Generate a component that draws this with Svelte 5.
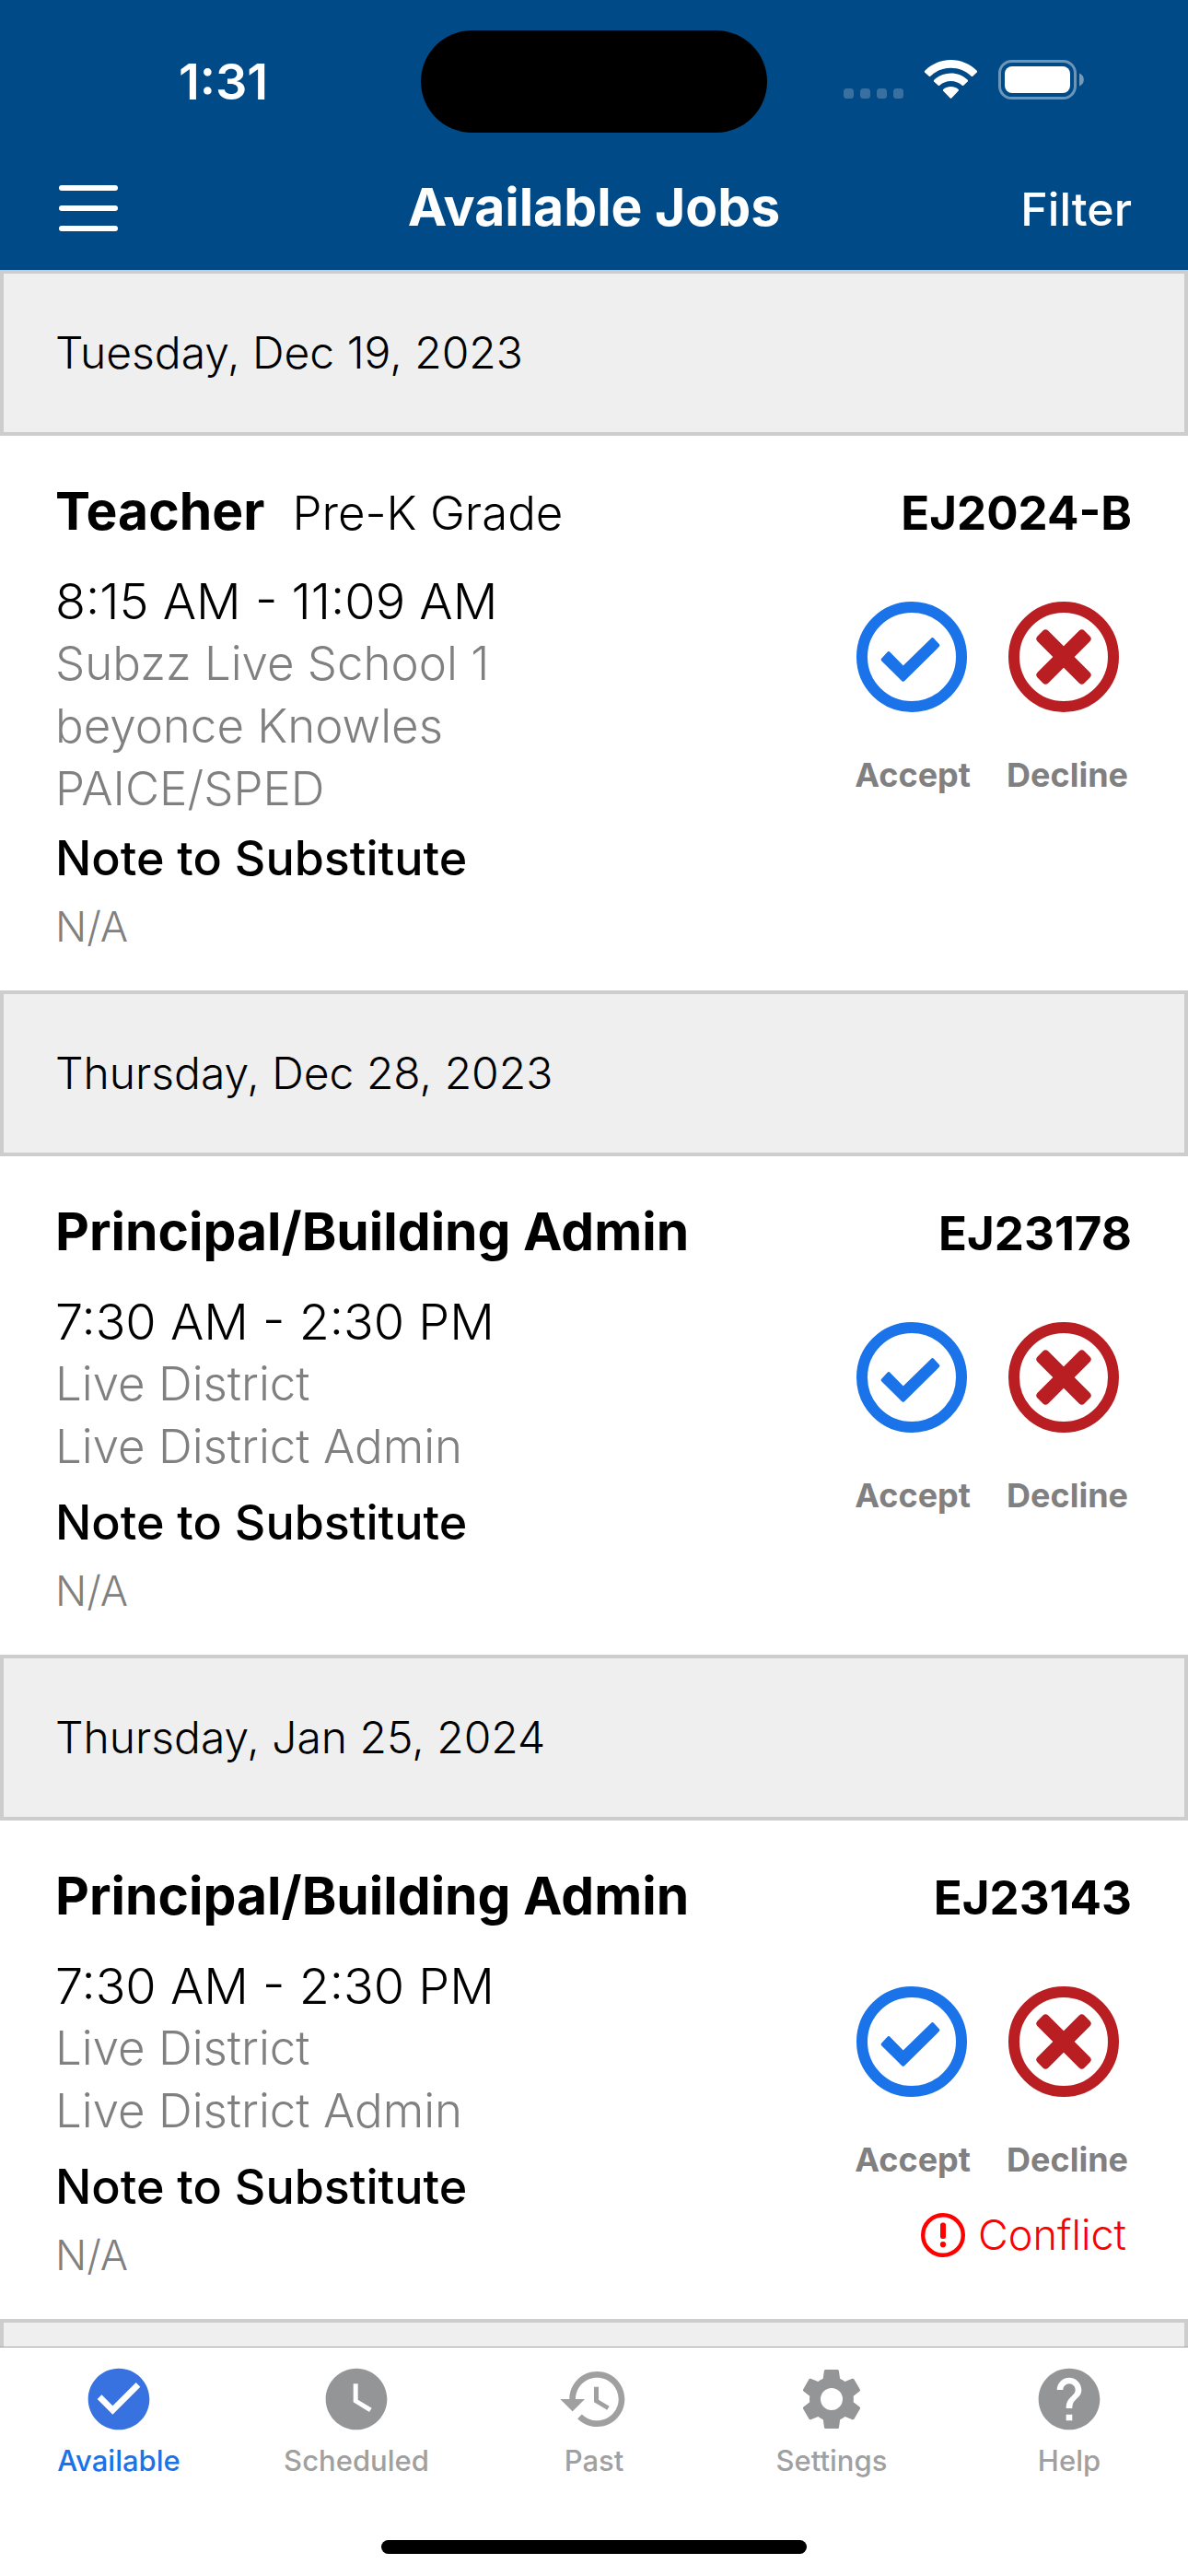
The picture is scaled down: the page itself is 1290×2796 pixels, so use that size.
<script>
  const days = [
    {
      date: 'Tuesday, Dec 19, 2023',
      title: 'Teacher',
      grade: 'Pre-K Grade',
      code: 'EJ2024-B',
      time: '8:15 AM - 11:09 AM',
      details: ['Subzz Live School 1', 'beyonce Knowles', 'PAICE/SPED'],
      note: 'N/A',
      conflict: false
    },
    {
      date: 'Thursday, Dec 28, 2023',
      title: 'Principal/Building Admin',
      code: 'EJ23178',
      time: '7:30 AM - 2:30 PM',
      details: ['Live District', 'Live District Admin'],
      note: 'N/A',
      conflict: false
    },
    {
      date: 'Thursday, Jan 25, 2024',
      title: 'Principal/Building Admin',
      code: 'EJ23143',
      time: '7:30 AM - 2:30 PM',
      details: ['Live District', 'Live District Admin'],
      note: 'N/A',
      conflict: true
    }
  ];

  const tabs = [
    {
      label: 'Available',
      kind: 'active',
      path: 'M12 2C6.48 2 2 6.48 2 12s4.48 10 10 10 10-4.48 10-10S17.52 2 12 2zm-2 15l-5-5 1.41-1.41L10 14.17l7.59-7.59L19 8l-9 9z'
    },
    {
      label: 'Scheduled',
      kind: 'solid',
      path: 'M12 2C6.5 2 2 6.5 2 12s4.5 10 10 10 10-4.5 10-10S17.5 2 12 2zm4.2 14.2L11 13V7h1.5v5.2l4.5 2.7-.8 1.3z'
    },
    {
      label: 'Past',
      kind: 'light',
      path: 'M13 3c-4.97 0-9 4.03-9 9H1l3.89 3.89.07.14L9 12H6c0-3.87 3.13-7 7-7s7 3.13 7 7-3.13 7-7 7c-1.93 0-3.68-.79-4.94-2.06l-1.42 1.42C8.27 19.99 10.51 21 13 21c4.97 0 9-4.03 9-9s-4.03-9-9-9zm-1 5v5l4.28 2.54.72-1.21-3.5-2.08V8H12z'
    },
    {
      label: 'Settings',
      kind: 'solid',
      path: 'M12 15.6A3.6 3.6 0 1 1 12 8.4a3.6 3.6 0 0 1 0 7.2M19.1 12.94c.04-.3.06-.61.06-.94s-.02-.64-.07-.94l2.03-1.58c.18-.14.23-.41.12-.61l-1.92-3.32c-.12-.22-.37-.29-.59-.22l-2.39.96c-.5-.38-1.03-.7-1.62-.94l-.36-2.54c-.04-.24-.24-.41-.48-.41h-3.84c-.24 0-.43.17-.47.41l-.36 2.54c-.59.24-1.13.57-1.62.94l-2.39-.96c-.22-.08-.47 0-.59.22L2.74 8.87c-.12.21-.08.47.12.61l2.03 1.58c-.05.3-.09.63-.09.94s.02.64.07.94l-2.03 1.58c-.18.14-.23.41-.12.61l1.92 3.32c.12.22.37.29.59.22l2.39-.96c.5.38 1.03.7 1.62.94l.36 2.54c.05.24.24.41.48.41h3.84c.24 0 .44-.17.47-.41l.36-2.54c.59-.24 1.13-.56 1.62-.94l2.39.96c.22.08.47 0 .59-.22l1.92-3.32c.12-.22.07-.47-.12-.61z'
    },
    {
      label: 'Help',
      kind: 'solid',
      path: 'M12 2C6.48 2 2 6.48 2 12s4.48 10 10 10 10-4.48 10-10S17.52 2 12 2zm1 17h-2v-2h2v2zm2.07-7.75l-.9.92C13.45 12.9 13 13.5 13 15h-2v-.5c0-1.1.45-2.1 1.17-2.83l1.24-1.26c.37-.36.59-.86.59-1.41 0-1.1-.9-2-2-2s-2 .9-2 2H8c0-2.21 1.79-4 4-4s4 1.79 4 4c0 .88-.36 1.68-.93 2.25z'
    }
  ];
</script>

<div class="app">
  <header>
    <div class="status">
      <span class="clock">1:31</span>
      <span class="island"></span>
      <svg class="indicators" viewBox="0 0 262 43" aria-hidden="true">
        <g fill="#fff" fill-opacity="0.22">
          <rect x="0" y="31" width="11" height="11" rx="3.5" />
          <rect x="18" y="31" width="11" height="11" rx="3.5" />
          <rect x="36" y="31" width="11" height="11" rx="3.5" />
          <rect x="54" y="31" width="11" height="11" rx="3.5" />
        </g>
        <g fill="#fff">
          <path d="M88 13.5Q87.500 12.500 88.500 11.500C95.500 4.500 105.500 0 116.500 0S137.500 4.500 144.500 11.500Q145.500 12.500 144.800 13.500L140.500 17.500Q139.500 18.500 138.500 17.500C132.500 12 125 8.800 116.500 8.800S100.500 12 94.500 17.500Q93.500 18.500 92.500 17.500Z" />
          <path d="M98 23.500Q97.500 22.500 98.500 21.500C103.500 17 109.500 14.500 116.500 14.500S129.500 17 134.500 21.500Q135.500 22.500 134.800 23.500L130.500 27.500Q129.500 28.500 128.500 27.500C125.200 24.700 121 23 116.500 23S107.800 24.700 104.500 27.500Q103.500 28.500 102.500 27.500Z" />
          <path d="M108 33.500Q107.500 32.500 108.500 31.800C110.800 29.900 113.500 29 116.500 29S122.200 29.900 124.500 31.800Q125.500 32.500 124.800 33.500L117.500 41.200Q116.500 42.200 115.500 41.200Z" />
        </g>
        <rect x="169.500" y="1.500" width="82" height="40" rx="13" fill="none" stroke="#fff" stroke-opacity="0.42" stroke-width="3" />
        <rect x="175" y="7" width="71" height="29" rx="8" fill="#fff" />
        <path d="M256 14.500a7.500 7.500 0 0 1 0 14z" fill="#fff" fill-opacity="0.45" />
      </svg>
    </div>
    <div class="bar">
      <button class="menu" aria-label="Menu"><span></span><span></span><span></span></button>
      <h1>Available Jobs</h1>
      <button class="filter">Filter</button>
    </div>
  </header>

  <main>
    {#each days as job}
      <section>
        <h2 class="date">{job.date}</h2>
        <article>
          <div class="heading">
            <h3>{job.title}</h3>
            {#if job.grade}<span class="grade">{job.grade}</span>{/if}
            <span class="code">{job.code}</span>
          </div>
          <div class="body">
            <div class="info">
              <div class="details">
                <p class="time">{job.time}</p>
                {#each job.details as line}
                  <p>{line}</p>
                {/each}
              </div>
              <h4>Note to Substitute</h4>
              <p class="note">{job.note}</p>
            </div>
            <div class="side">
              <div class="actions">
                <button>
                  <svg viewBox="0 0 120 120" fill="#1a73e8" aria-hidden="true">
                    <circle cx="60" cy="60" r="54" fill="none" stroke="#1a73e8" stroke-width="12" />
                    <path d="M29 63L35 56.500 50.700 72.500 82.500 41.500 88 47.500 50.700 84.500Z" stroke="#1a73e8" stroke-width="4.500" stroke-linejoin="round" />
                  </svg>
                  Accept
                </button>
                <button>
                  <svg viewBox="0 0 120 120" fill="#b91f22" aria-hidden="true">
                    <circle cx="60" cy="60" r="54" fill="none" stroke="#b91f22" stroke-width="12" />
                    <rect x="24" y="51.800" width="72" height="16.400" rx="4" transform="rotate(45 60 60)" />
                    <rect x="24" y="51.800" width="72" height="16.400" rx="4" transform="rotate(-45 60 60)" />
                  </svg>
                  Decline
                </button>
              </div>
              {#if job.conflict}
                <div class="conflict">
                  <svg viewBox="0 0 48 48" fill="#f00" aria-hidden="true">
                    <circle cx="24" cy="24" r="21.800" fill="none" stroke="#f00" stroke-width="4.400" />
                    <rect x="21" y="10.500" width="6" height="17.500" rx="2.500" />
                    <circle cx="24" cy="34.200" r="3.100" />
                  </svg>
                  Conflict
                </div>
              {/if}
            </div>
          </div>
        </article>
      </section>
    {/each}
    <div class="date"></div>
  </main>

  <footer>
    <nav>
      {#each tabs as tab}
        <button class={tab.kind}>
          <svg viewBox="0 0 24 24" aria-hidden="true"><path fill-rule="evenodd" d={tab.path} /></svg>
          {tab.label}
        </button>
      {/each}
    </nav>
    <div class="home"></div>
  </footer>
</div>

<style>
  :global(body) {
    margin: 0;
  }
  .app {
    display: flex;
    flex-direction: column;
    height: 100vh;
    background: #fff;
    color: #000;
    font-family: Inter, 'Liberation Sans', sans-serif;
    font-weight: 300;
  }
  h1, h2, h3, h4, p {
    margin: 0;
  }
  button {
    margin: 0;
    padding: 0;
    border: 0;
    background: none;
    color: inherit;
    font: inherit;
  }
  svg {
    display: block;
  }
  header {
    flex: none;
    background: #004a87;
    color: #fff;
  }
  .status {
    display: grid;
    grid-template-columns: 1fr 376px 1fr;
    align-items: center;
    justify-items: center;
    padding: 33px 0 12px;
  }
  .clock {
    padding-left: 28px;
    font-size: 54px;
    line-height: 64px;
    font-weight: 600;
  }
  .island {
    width: 376px;
    height: 111px;
    border-radius: 56px;
    background: #000;
  }
  .indicators {
    width: 262px;
    height: 43px;
    margin: 0 30px 4px 0;
  }
  .bar {
    display: grid;
    grid-template-columns: 1fr auto 1fr;
    align-items: baseline;
    padding: 35px 61px 34px;
  }
  .menu {
    display: flex;
    flex-direction: column;
    align-self: center;
    justify-self: start;
    gap: 16px;
    padding: 2px 0 0 3px;
  }
  .menu span {
    width: 64px;
    height: 6px;
    border-radius: 3px;
    background: #fff;
  }
  h1 {
    font-size: 57px;
    line-height: 68px;
    font-weight: 700;
  }
  .filter {
    justify-self: end;
    font-size: 50px;
    line-height: 60px;
    font-weight: 500;
  }
  main {
    flex: 1;
    min-height: 0;
    overflow: hidden;
  }
  .date {
    box-sizing: border-box;
    min-height: 180px;
    padding: 56px;
    border: 4px solid #cdcdcd;
    background: #efefef;
    font-size: 48px;
    line-height: 60px;
    font-weight: 300;
  }
  article {
    padding: 48px 61px 33px 60px;
  }
  .heading {
    display: flex;
    align-items: baseline;
    gap: 30px;
    line-height: 64px;
  }
  h3 {
    font-size: 57px;
    line-height: 68px;
    font-weight: 700;
  }
  .grade {
    font-size: 51px;
  }
  .code {
    margin-left: auto;
    font-size: 51px;
    font-weight: 700;
  }
  .body {
    display: flex;
    justify-content: space-between;
    margin-top: 31px;
  }
  .details {
    min-height: 209px;
    color: #808080;
    font-size: 51px;
    line-height: 68px;
  }
  .details .time {
    color: #000;
    font-size: 54px;
    line-height: 66px;
  }
  h4 {
    margin-top: 8px;
    font-size: 52px;
    line-height: 68px;
    font-weight: 500;
  }
  .note {
    margin-top: 4px;
    color: #808080;
    font-size: 45px;
    line-height: 72px;
  }
  .side {
    display: flex;
    flex-direction: column;
    align-items: flex-end;
    padding: 33px 4px 0 0;
  }
  .actions {
    display: flex;
    gap: 39px;
  }
  .actions button {
    color: #808080;
    font-size: 36px;
    line-height: 44px;
    font-weight: 700;
    text-align: left;
  }
  .actions svg {
    width: 120px;
    height: 120px;
    margin: 0 2px 46px;
  }
  .conflict {
    display: flex;
    align-items: center;
    gap: 14px;
    margin-top: 30px;
    padding-right: 2px;
    color: #f00;
    font-size: 45px;
    line-height: 60px;
  }
  .conflict svg {
    width: 48px;
    height: 48px;
  }
  footer {
    flex: none;
    padding-bottom: 24px;
    border-top: 1px solid #a4a4a4;
    background: #fff;
  }
  nav {
    display: grid;
    grid-template-columns: repeat(5, 1fr);
    padding: 16px 0 66px;
  }
  nav button {
    display: flex;
    flex-direction: column;
    align-items: center;
    gap: 7px;
    color: #a0a0a0;
    font-size: 31px;
    line-height: 40px;
    font-weight: 500;
  }
  nav svg {
    width: 80px;
    height: 80px;
    fill: #939597;
  }
  .light svg {
    fill: #a0a0a0;
  }
  .active {
    color: #1a73e8;
  }
  .active svg {
    fill: #3871e0;
  }
  .home {
    width: 462px;
    height: 15px;
    margin: 0 auto;
    border-radius: 8px;
    background: #000;
  }
</style>
